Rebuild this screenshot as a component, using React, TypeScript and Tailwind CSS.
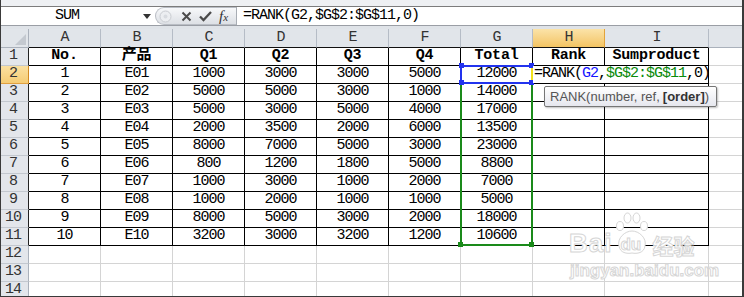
import React from 'react';

const headers = ['No.', '产品', 'Q1', 'Q2', 'Q3', 'Q4', 'Total', 'Rank', 'Sumproduct'];
const data: string[][] = [
  ['1', 'E01', '1000', '3000', '3000', '5000', '12000'],
  ['2', 'E02', '5000', '5000', '3000', '1000', '14000'],
  ['3', 'E03', '5000', '3000', '5000', '4000', '17000'],
  ['4', 'E04', '2000', '3500', '2000', '6000', '13500'],
  ['5', 'E05', '8000', '7000', '5000', '3000', '23000'],
  ['6', 'E06', '800', '1200', '1800', '5000', '8800'],
  ['7', 'E07', '1000', '3000', '1000', '2000', '7000'],
  ['8', 'E08', '1000', '2000', '1000', '1000', '5000'],
  ['9', 'E09', '8000', '5000', '3000', '2000', '18000'],
  ['10', 'E10', '3200', '3000', '3200', '1200', '10600'],
];
const letters = ['A', 'B', 'C', 'D', 'E', 'F', 'G', 'H', 'I', ''];

function HeaderRow() {
  return (
    <>
      <div className="relative bg-[#e1e5ea] border-r border-b border-[#aab1bb]">
        <svg className="absolute right-[2px] bottom-[2px]" width="11" height="11" viewBox="0 0 11 11">
          <polygon points="11,0 11,11 0,11" fill="#c4c9d0" />
        </svg>
      </div>
      {letters.map((l, i) => {
        const sel = i === 7;
        const last = i === 9;
        return (
          <div
            key={i}
            className={
              'flex items-center justify-center border-b text-[15px] tracking-[-1px] text-[#333] ' +
              (last ? 'border-[#aab1bb] ' : 'border-r ') +
              (sel
                ? 'bg-gradient-to-b from-[#fbe3a8] to-[#f3c462] border-r-[#e2a33b] border-b-[#111] '
                : last
                ? 'bg-[#e1e5ea] '
                : 'bg-[#e1e5ea] border-r-[#b5bcc6] border-b-[#111] ')
            }
          >
            {l}
          </div>
        );
      })}
    </>
  );
}

function BodyRow({ r }: { r: number }) {
  const inTable = r >= 1 && r <= 11;
  const selRow = r === 2;
  const cells: string[] =
    r === 1 ? headers : r >= 2 && r <= 11 ? [...data[r - 2], '', ''] : new Array(9).fill('');
  return (
    <>
      <div
        className={
          'flex items-center justify-center pr-[3px] border-r border-b text-[15px] tracking-[-1px] text-[#333] ' +
          (selRow
            ? 'bg-gradient-to-b from-[#fbe0a0] to-[#f5cc74] border-r-[#d28a22] border-b-[#e0a040]'
            : 'bg-[#e3e6eb] border-b-[#c3c8cf] ' + (inTable ? 'border-r-[#222]' : 'border-r-[#aab1bb]'))
        }
      >
        {r}
      </div>
      {cells.map((v, c) => (
        <div
          key={c}
          className={
            'flex items-center justify-center border-r border-b whitespace-nowrap text-black ' +
            (r === 1 ? 'font-bold text-[15px] tracking-[-0.2px] ' : 'text-[15px] tracking-[-1px] ') +
            (inTable ? 'border-[#000]' : 'border-[#d4d4d4]')
          }
        >
          {v}
        </div>
      ))}
      <div className="border-b border-[#d4d4d4]" />
    </>
  );
}

export default function App() {
  const rows = Array.from({ length: 14 }, (_, i) => i + 1);
  return (
    <div className="relative w-[744px] h-[297px] overflow-hidden bg-white border-l border-r-2 border-b border-[#3a3a3a] [font-family:'Liberation_Mono','Noto_Sans_CJK_SC',monospace]">
      {/* top strip */}
      <div className="h-[7px] bg-[#eef0f3] border-b border-[#7c7c7c]" />
      {/* formula bar */}
      <div className="flex h-[18px] bg-white">
        <div className="flex w-[154px] items-center">
          <div className="w-[132px] text-center text-[15px] tracking-[-1px] text-black">SUM</div>
          <svg width="8" height="5" viewBox="0 0 8 5" className="ml-[10px] mt-[1px]">
            <polygon points="0,0 8,0 4,5" fill="#333" />
          </svg>
        </div>
        <div className="flex w-[81px] items-center rounded-l-[9px] border border-r-0 border-[#b9bdc4] bg-gradient-to-b from-[#f7f8fa] to-[#dde0e5] pl-[3px]">
          <svg width="13" height="13" viewBox="0 0 13 13">
            <circle cx="6.5" cy="6.5" r="5.5" fill="#eceef1" stroke="#c9ccd1" />
            <circle cx="6.5" cy="6.5" r="2" fill="#d8dbe0" />
          </svg>
          <svg width="11" height="11" viewBox="0 0 11 11" className="ml-[9px]">
            <path d="M1.5 1.5 L9.5 9.5 M9.5 1.5 L1.5 9.5" stroke="#4a4a4a" strokeWidth="2" />
          </svg>
          <svg width="13" height="12" viewBox="0 0 13 12" className="ml-[7px]">
            <path d="M1 6.5 L4.5 10 L12 2" stroke="#4a4a4a" strokeWidth="2.3" fill="none" />
          </svg>
          <span className="ml-[7px] [font-family:'Liberation_Serif',serif] italic text-[15px] leading-none text-[#333]">
            f<span className="text-[11px]">x</span>
          </span>
        </div>
        <div className="flex flex-1 items-center border-l border-[#a8adb4] pl-[6px] text-[15px] tracking-[-1px] text-black">
          =RANK(G2,$G$2:$G$11,0)
        </div>
      </div>
      <div className="h-px bg-[#9a9ea5]" />
      <div className="h-[3px] bg-[#dfe3e8]" />

      {/* sheet grid */}
      <div className="grid grid-cols-[28px_72px_72px_72px_72px_72px_72px_72px_72px_104px_1fr] grid-rows-[19px_repeat(14,18px)]">
        <HeaderRow />
        {rows.map((r) => (
          <BodyRow key={r} r={r} />
        ))}
      </div>

      {/* green range $G$2:$G$11 */}
      <div className="absolute left-[459px] top-[65px] w-[73px] h-[181px] border-2 border-[#1a8a1a]" />
      <div className="absolute left-[457px] top-[242px] w-[5px] h-[5px] bg-[#1a8a1a]" />
      <div className="absolute left-[528px] top-[242px] w-[5px] h-[5px] bg-[#1a8a1a]" />

      {/* blue ref G2 */}
      <div className="absolute left-[459px] top-[65px] w-[73px] h-[19px] border-2 border-[#2233ee]" />
      <div className="absolute left-[530px] top-[67px] w-[2px] h-[15px] bg-[#f2e21a]" />
      <div className="absolute left-[458px] top-[63px] w-[5px] h-[5px] bg-[#2233ee]" />
      <div className="absolute left-[458px] top-[80px] w-[5px] h-[5px] bg-[#2233ee]" />
      <div className="absolute left-[528px] top-[63px] w-[5px] h-[5px] bg-[#2233ee]" />
      <div className="absolute left-[528px] top-[80px] w-[5px] h-[5px] bg-[#2233ee]" />

      {/* in-cell edit H2 */}
      <div className="absolute left-[532px] top-[66px] w-[175px] h-[17px] bg-white flex items-center pl-[1px] whitespace-nowrap text-[15px] tracking-[-1px] text-black">
        =RANK(<span className="text-[#1515ff]">G2</span>,<span className="text-[#0a8a0a]">$G$2:$G$11</span>,0)
        <span className="ml-[-1px] inline-block w-[1px] h-[15px] bg-black" />
      </div>

      {/* tooltip */}
      <div className="absolute left-[543px] top-[86px] w-[173px] h-[21px] flex items-center pl-[5px] rounded-[2px] border border-[#767676] bg-gradient-to-b from-white to-[#e6e7ee] shadow-[1px_1px_2px_rgba(0,0,0,0.25)] [font-family:'Liberation_Sans',sans-serif] text-[13px] text-[#555] whitespace-nowrap">
        RANK(number, ref, <span className="font-bold text-[#333] ml-[3px]">[order]</span>)
      </div>

      {/* watermark */}
      <div className="absolute left-[568px] top-[212px] flex items-end text-white [-webkit-text-stroke:1px_#d6d6d6] [font-family:'Liberation_Sans',sans-serif] font-bold">
        <span className="text-[26px] leading-none tracking-[1px]">Bai</span>
        <span className="relative ml-[3px] w-[34px] h-[44px]">
          <svg className="absolute left-0 top-0" width="34" height="44" viewBox="0 0 34 44">
            <g fill="white" stroke="#d6d6d6" strokeWidth="1">
              <ellipse cx="5" cy="14" rx="3.5" ry="4.5" />
              <ellipse cx="12.5" cy="6" rx="3.5" ry="5" />
              <ellipse cx="21.5" cy="6" rx="3.5" ry="5" />
              <ellipse cx="29" cy="14" rx="3.5" ry="4.5" />
              <path d="M4 34 C2 26 10 19 17 19 C24 19 32 26 30 34 C29 41 22 42 17 41 C12 42 5 41 4 34 Z" />
            </g>
          </svg>
          <span className="absolute left-[5px] top-[24px] text-[17px] leading-none">du</span>
        </span>
        <span className="ml-[3px] text-[21px] leading-none [font-family:'Noto_Sans_CJK_SC',sans-serif]">经验</span>
      </div>
      <div className="absolute left-[569px] top-[262px] text-[17px] leading-none text-white [-webkit-text-stroke:1px_#d6d6d6] [font-family:'Liberation_Sans',sans-serif] font-bold">
        jingyan.baidu.com
      </div>
    </div>
  );
}
